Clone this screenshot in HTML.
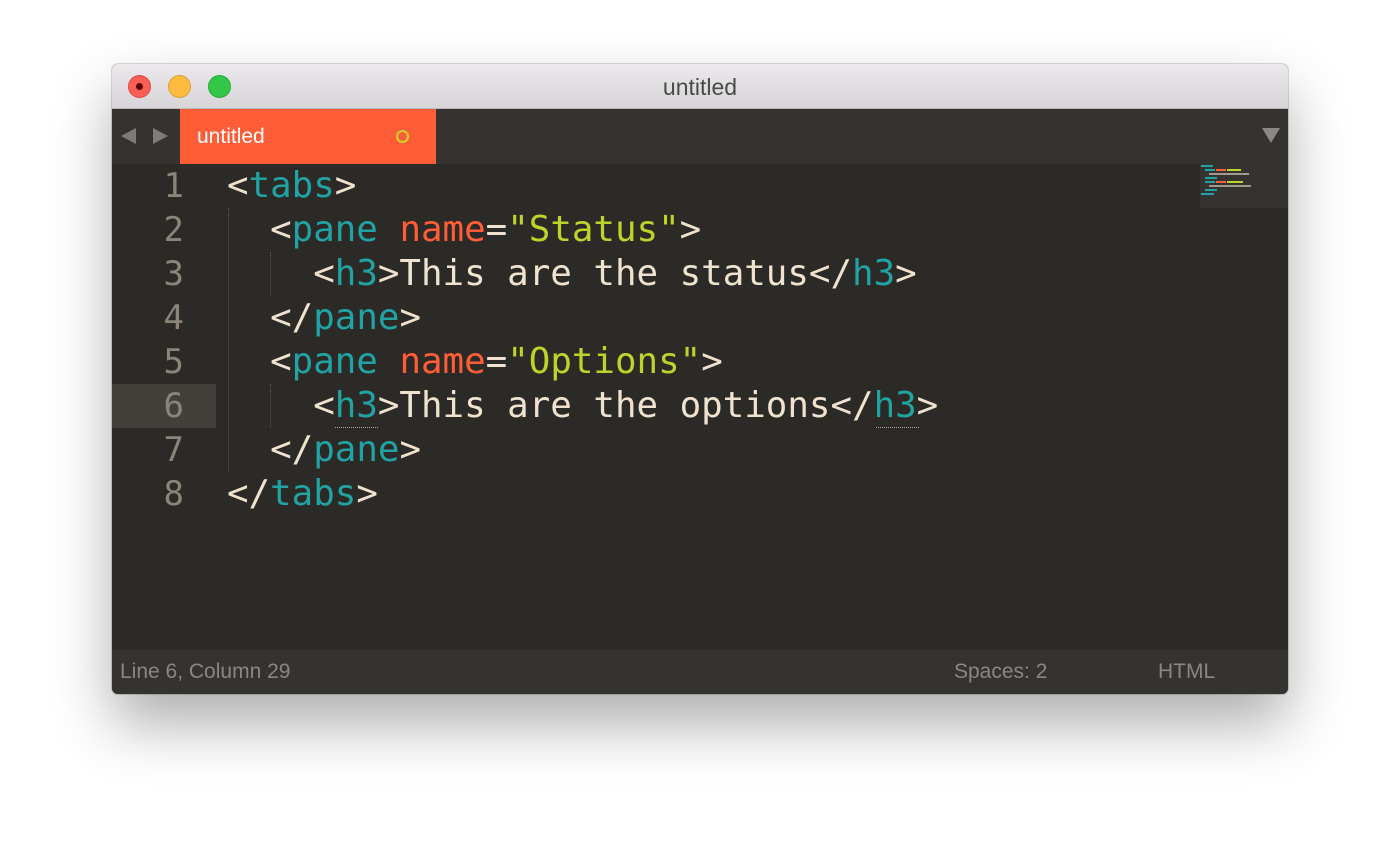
<!DOCTYPE html>
<html><head><meta charset="utf-8"><style>
body{margin:0;width:1400px;height:854px;background:#fff;position:relative;overflow:hidden;font-family:"Liberation Sans","DejaVu Sans",sans-serif}
.win{position:absolute;left:112px;top:64px;width:1176px;height:630px;border-radius:6px;overflow:hidden;box-shadow:0 30px 60px rgba(0,0,0,.32),0 0 0 1px rgba(0,0,0,.15);background:#2c2a26}
.title{position:absolute;left:0;top:0;width:100%;height:44px;background:linear-gradient(#ece9ec,#d7d5d7);border-bottom:1px solid #b9b7b9;text-align:center;line-height:46px;font-size:23px;color:#4a4a4a}
.dot{position:absolute;top:11px;width:23px;height:23px;border-radius:50%;box-sizing:border-box}
.tabbar{position:absolute;left:0;top:45px;width:100%;height:55px;background:#353330}
.tab{position:absolute;left:68px;top:0;width:256px;height:55px;background:#ff5d38;color:#fff;font-size:21px;line-height:56px;padding-left:17px;box-sizing:border-box}
.circ{position:absolute;left:216px;top:21px;width:13px;height:13px;border:2px solid #c8d42a;border-radius:50%;box-sizing:border-box}
.ed{position:absolute;left:0;top:100px;width:100%;height:486px;background:#2c2a26}
.status{position:absolute;left:0;top:586px;width:100%;height:44px;background:#353330;color:#8a8780;font-size:21px;line-height:44px}
.ln{position:absolute;left:0;width:72px;text-align:right;font-family:"DejaVu Sans Mono",monospace;font-size:34px;color:#8a847a;line-height:44px}
.code{position:absolute;left:115px;font-family:"DejaVu Sans Mono",monospace;font-size:35.8px;line-height:44px;color:#efe3d0;white-space:pre}
.t{color:#22a3a3}.a{color:#ff5d38}.s{color:#bcd42a}
.guide{position:absolute;width:0;border-left:1px dotted #5a5750}
.m{position:absolute;height:2px}
</style></head><body>
<div class="win">
 <div class="title">untitled
  <div class="dot" style="left:16px;background:#fc5f57;border:1px solid #de4a41"><div style="position:absolute;left:7px;top:7px;width:7px;height:7px;border-radius:50%;background:#5a0000"></div></div>
  <div class="dot" style="left:56px;background:#fdbc40;border:1px solid #de9f34"></div>
  <div class="dot" style="left:96px;background:#33c748;border:1px solid #27aa35"></div>
 </div>
 <div class="tabbar">
  <svg style="position:absolute;left:8px;top:18px" width="50" height="18"><polygon points="1,9 16,1 16,17" fill="#7d7b78"/><polygon points="33,1 48,9 33,17" fill="#7d7b78"/></svg>
  <div class="tab">untitled<div class="circ"></div></div>
  <svg style="position:absolute;left:1150px;top:19px" width="18" height="16"><polygon points="0,0 18,0 9,15" fill="#8a8885"/></svg>
 </div>
 <div class="ed">
  <div style="position:absolute;left:0;top:220px;width:104px;height:44px;background:#43403b"></div>
  <div style="position:absolute;left:1088px;top:0;width:88px;height:44px;background:#353330"></div>
  <div class="m" style="left:1089px;top:1px;width:12px;background:#22a3a3"></div>
  <div class="m" style="left:1093px;top:5px;width:10px;background:#22a3a3"></div><div class="m" style="left:1104px;top:5px;width:10px;background:#ff5d38"></div><div class="m" style="left:1115px;top:5px;width:14px;background:#bcd42a"></div>
  <div class="m" style="left:1097px;top:9px;width:40px;background:#a09a8e"></div>
  <div class="m" style="left:1093px;top:13px;width:12px;background:#22a3a3"></div>
  <div class="m" style="left:1093px;top:17px;width:10px;background:#22a3a3"></div><div class="m" style="left:1104px;top:17px;width:10px;background:#ff5d38"></div><div class="m" style="left:1115px;top:17px;width:16px;background:#bcd42a"></div>
  <div class="m" style="left:1097px;top:21px;width:42px;background:#a09a8e"></div>
  <div class="m" style="left:1093px;top:25px;width:12px;background:#22a3a3"></div>
  <div class="m" style="left:1089px;top:29px;width:13px;background:#22a3a3"></div>
  <div class="guide" style="left:116px;top:44px;height:264px"></div>
  <div class="guide" style="left:158px;top:88px;height:44px"></div>
  <div class="guide" style="left:158px;top:220px;height:44px"></div>
  <div style="position:absolute;left:223px;top:263px;width:43px;border-top:1px dotted #aaa"></div>
  <div style="position:absolute;left:764px;top:263px;width:43px;border-top:1px dotted #aaa"></div>
  <div class="ln" style="top:0">1</div><div class="ln" style="top:44px">2</div><div class="ln" style="top:88px">3</div><div class="ln" style="top:132px">4</div><div class="ln" style="top:176px">5</div><div class="ln" style="top:220px">6</div><div class="ln" style="top:264px">7</div><div class="ln" style="top:308px">8</div>
  <div class="code" style="top:0">&lt;<span class="t">tabs</span>&gt;
  &lt;<span class="t">pane</span> <span class="a">name</span>=<span class="s">"Status"</span>&gt;
    &lt;<span class="t">h3</span>&gt;This are the status&lt;/<span class="t">h3</span>&gt;
  &lt;/<span class="t">pane</span>&gt;
  &lt;<span class="t">pane</span> <span class="a">name</span>=<span class="s">"Options"</span>&gt;
    &lt;<span class="t">h3</span>&gt;This are the options&lt;/<span class="t">h3</span>&gt;
  &lt;/<span class="t">pane</span>&gt;
&lt;/<span class="t">tabs</span>&gt;</div>
 </div>
 <div class="status"><span style="position:absolute;left:8px">Line 6, Column 29</span><span style="position:absolute;left:842px">Spaces: 2</span><span style="position:absolute;left:1046px">HTML</span></div>
</div>
</body></html>
